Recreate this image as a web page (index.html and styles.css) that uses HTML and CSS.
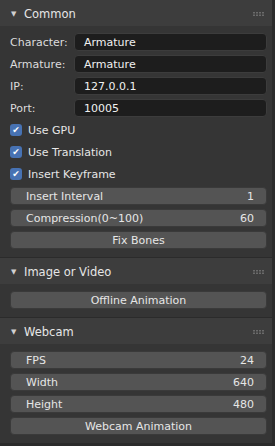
FILE: index.html
```html
<!DOCTYPE html>
<html lang="en">
<head>
  <meta charset="UTF-8">
  <title>Panel</title>
  <link rel="stylesheet" href="styles.css">
</head>
<body>

  <div class="panel">
    <div class="panel-header">
      <span class="arrow">&#9660;</span>
      <span class="title">Common</span>
      <svg class="grip" width="11" height="4" viewBox="0 0 11 4">
        <rect x="0" y="0" width="2" height="1.5"/><rect x="3" y="0" width="2" height="1.5"/>
        <rect x="6" y="0" width="2" height="1.5"/><rect x="9" y="0" width="2" height="1.5"/>
        <rect x="0" y="2.5" width="2" height="1.5"/><rect x="3" y="2.5" width="2" height="1.5"/>
        <rect x="6" y="2.5" width="2" height="1.5"/><rect x="9" y="2.5" width="2" height="1.5"/>
      </svg>
    </div>
    <div class="panel-body">
      <div class="prop"><label>Character:</label><div class="field">Armature</div></div>
      <div class="prop"><label>Armature:</label><div class="field">Armature</div></div>
      <div class="prop"><label>IP:</label><div class="field">127.0.0.1</div></div>
      <div class="prop"><label>Port:</label><div class="field">10005</div></div>
      <div class="check"><span class="box">&#10004;</span>Use GPU</div>
      <div class="check"><span class="box">&#10004;</span>Use Translation</div>
      <div class="check"><span class="box">&#10004;</span>Insert Keyframe</div>
      <div class="btn num"><span>Insert Interval</span><span>1</span></div>
      <div class="btn num"><span>Compression(0~100)</span><span>60</span></div>
      <div class="btn">Fix Bones</div>
    </div>
  </div>

  <div class="panel">
    <div class="panel-header">
      <span class="arrow">&#9660;</span>
      <span class="title">Image or Video</span>
      <svg class="grip" width="11" height="4" viewBox="0 0 11 4">
        <rect x="0" y="0" width="2" height="1.5"/><rect x="3" y="0" width="2" height="1.5"/>
        <rect x="6" y="0" width="2" height="1.5"/><rect x="9" y="0" width="2" height="1.5"/>
        <rect x="0" y="2.5" width="2" height="1.5"/><rect x="3" y="2.5" width="2" height="1.5"/>
        <rect x="6" y="2.5" width="2" height="1.5"/><rect x="9" y="2.5" width="2" height="1.5"/>
      </svg>
    </div>
    <div class="panel-body">
      <div class="btn">Offline Animation</div>
    </div>
  </div>

  <div class="panel">
    <div class="panel-header">
      <span class="arrow">&#9660;</span>
      <span class="title">Webcam</span>
      <svg class="grip" width="11" height="4" viewBox="0 0 11 4">
        <rect x="0" y="0" width="2" height="1.5"/><rect x="3" y="0" width="2" height="1.5"/>
        <rect x="6" y="0" width="2" height="1.5"/><rect x="9" y="0" width="2" height="1.5"/>
        <rect x="0" y="2.5" width="2" height="1.5"/><rect x="3" y="2.5" width="2" height="1.5"/>
        <rect x="6" y="2.5" width="2" height="1.5"/><rect x="9" y="2.5" width="2" height="1.5"/>
      </svg>
    </div>
    <div class="panel-body">
      <div class="btn num"><span>FPS</span><span>24</span></div>
      <div class="btn num"><span>Width</span><span>640</span></div>
      <div class="btn num"><span>Height</span><span>480</span></div>
      <div class="btn">Webcam Animation</div>
    </div>
  </div>

</body>
</html>
```

FILE: styles.css
```css
* {
  box-sizing: border-box;
}

body {
  margin: 0;
  background: #2b2b2b;
  font-family: 'DejaVu Sans', sans-serif;
  font-size: 11px;
  color: #e6e6e6;
  width: 275px;
  height: 446px;
  overflow: hidden;
}

.panel {
  margin-bottom: 1px;
  margin-right: 3px;
}

.panel-header {
  height: 26px;
  background: #3d3d3d;
  display: flex;
  align-items: center;
  padding: 1px 7px 0 11px;
}

.arrow {
  font-size: 7px;
  color: #cfcfcf;
  width: 13px;
}

.title {
  font-size: 11.5px;
  flex: 1;
}

.grip {
  fill: #6a6a6a;
  margin-right: 1px;
}

.panel-body {
  background: #353535;
  padding: 7px 5px 8px 10px;
  display: flex;
  flex-direction: column;
  gap: 4px;
}

.prop {
  display: flex;
  align-items: center;
  height: 18px;
}

.prop label {
  width: 64px;
  color: #dcdcdc;
}

.field {
  flex: 1;
  height: 18px;
  background: #1d1d1d;
  border: 1px solid #3c3c3c;
  border-radius: 4px;
  padding: 0 0 0 9px;
  line-height: 17px;
  color: #f0f0f0;
}

.check {
  display: flex;
  align-items: center;
  height: 18px;
}

.box {
  width: 12px;
  height: 12px;
  border-radius: 3px;
  background: #4772b3;
  color: #fff;
  font-size: 9px;
  line-height: 12px;
  text-align: center;
  margin-right: 6px;
}

.btn {
  height: 18px;
  background: #545454;
  border: 1px solid #3a3a3a;
  border-radius: 4px;
  text-align: center;
  line-height: 17px;
  color: #e6e6e6;
}

.btn.num {
  display: flex;
  justify-content: space-between;
  padding: 0 12px 0 15px;
}
```
